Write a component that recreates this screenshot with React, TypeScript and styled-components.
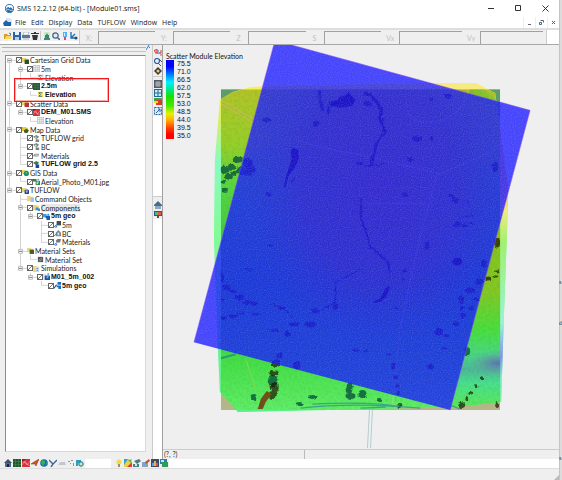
import React from "react";
import styled, { createGlobalStyle } from "styled-components";

const GlobalStyle = createGlobalStyle`
  * { box-sizing: border-box; }
  body { margin: 0; background: #efefef; color: #333; font: 7px/8px Lato, "Liberation Sans", Arial, sans-serif; }
  button, input { font: inherit; color: inherit; margin: 0; padding: 0; border: 0; background: none; border-radius: 0; }
`;

/* ---------- layout ---------- */
const Desktop = styled.div`
  display: flex;
  min-height: 100vh;
`;
const AppWindow = styled.div`
  flex: 1;
  min-width: 0;
  display: flex;
  flex-direction: column;
  background: #efefef;
`;
const Behind = styled.aside`
  flex: 0 0 3px;
  background: #dcdcdc;
  box-shadow: inset 1px 0 #c4c4c4;
  padding-top: 278px;
  display: flex;
  flex-direction: column;
  align-items: flex-start;
  gap: 33px;
  font: 5px/8px "Liberation Sans", Arial, sans-serif;
  span:last-child { margin-top: 94px; }
`;

/* ---------- title and menu ---------- */
const TitleBar = styled.header`
  display: flex;
  align-items: center;
  height: 17px;
  padding-left: 5px;
  background: #fff;
  font: 7px/10px "Open Sans", "Noto Sans", sans-serif;
  color: #111;
`;
const Title = styled.h1`
  flex: 1;
  margin: 0 0 0 3px;
  font-size: 7px;
  font-weight: 400;
`;
const CaptionButton = styled.button`
  width: 27px;
  height: 16px;
  display: grid;
  place-items: center;
`;
const MenuBar = styled.nav`
  display: flex;
  align-items: center;
  height: 11px;
  padding-left: 3px;
  background: #fff;
  font: 7px/10px "Open Sans", "Noto Sans", sans-serif;
  color: #222;
`;
const MenuList = styled.div`
  flex: 1;
  display: flex;
  gap: 5px;
  margin-left: 3px;
`;
const MdiButton = styled.button`
  width: 12px;
  height: 11px;
  display: grid;
  place-items: center;
  border-left: 1px solid #eee;
`;

/* ---------- coordinate bar ---------- */
const TopTools = styled.div`
  display: flex;
  height: 17px;
  background: #fff;
  border-top: 2px solid #dedede;
  border-bottom: 1px solid #a8a8a8;
`;
const FileTools = styled.div`
  display: flex;
  align-items: center;
  align-self: flex-start;
  height: 11px;
  width: 79px;
  padding-left: 3px;
  background: #f0f0f0;
`;
const ToolButton = styled.button<{ $size?: number }>`
  width: ${p => p.$size ?? 9}px;
  height: ${p => p.$size ?? 9}px;
  display: grid;
  place-items: center;
`;
const ToolDivider = styled.span`
  width: 1px;
  height: 9px;
  margin: 0 1px;
  background: #c8c8c8;
`;
const CoordBar = styled.div`
  flex: 1;
  min-width: 0;
  display: grid;
  grid-template-columns: 75fr 75fr 76fr 76fr 81fr 81fr;
  padding: 1px 3px 0 0;
  margin-right: 12px;
  background: #efefef;
  border-left: 1px solid #ccc;
  border-right: 1px solid #ccc;
`;
const Coord = styled.label`
  min-width: 0;
  display: flex;
  align-items: center;
  color: #c0c0c0;
  font-size: 7px;
  span { width: 18px; text-align: center; }
  input {
    flex: 1;
    min-width: 0;
    align-self: stretch;
    border-top: 1px solid #a0a0a0;
    border-left: 1px solid #a0a0a0;
  }
`;

/* ---------- work area ---------- */
const Work = styled.main`
  display: flex;
`;
const Explorer = styled.section`
  flex: 0 0 152px;
  padding: 0 6px 7px 5px;
  display: flex;
  flex-direction: column;
`;
const Gripper = styled.div`
  height: 10px;
  margin-left: -3px;
  display: flex;
  align-items: flex-start;
  &::before {
    content: "";
    flex: 1;
    height: 3px;
    margin-top: 2px;
    border-top: 1px solid #b4b4b4;
    border-bottom: 1px solid #c4c4c4;
  }
  svg { margin-right: -4px; }
`;
const Tree = styled.div`
  position: relative;
  flex: 1;
  background: #fff;
  border: 1px solid #d8d8d8;
  border-top: 1px solid #8c8c8c;
  border-left: 1px solid #8c8c8c;
`;
const Rows = styled.ul`
  list-style: none;
  margin: 0;
  padding: 0;
  height: 234px;
  display: grid;
  grid-auto-rows: 1fr;
`;
const Row = styled.li`
  display: flex;
  align-items: center;
  min-height: 0;
  padding-left: 1px;
  label { display: flex; align-items: center; white-space: nowrap; }
`;
const Guide = styled.span<{ $on: boolean; $narrow: boolean }>`
  flex: 0 0 ${p => (p.$narrow ? 10 : 11)}px;
  align-self: stretch;
  padding-left: 2px;
  &::before {
    content: "";
    display: block;
    width: 1px;
    height: 100%;
    background: ${p => (p.$on ? "#d4d4d4" : "transparent")};
  }
`;
const Branch = styled.span`
  flex: 0 0 9px;
  align-self: stretch;
  display: flex;
  svg { height: 100%; width: 9px; }
`;
const Check = styled.input`
  appearance: none;
  width: 6px;
  height: 6px;
  border: 1px solid #666;
  background: #fff linear-gradient(135deg, transparent 42%, #777 42% 62%, transparent 62%);
`;
const RowIcon = styled.span`
  width: 7px;
  height: 7px;
  margin-right: 1px;
  svg { display: block; }
`;
const RowText = styled.span<{ $bold?: boolean; $selected?: boolean }>`
  font-family: ${p => (p.$bold ? '"Liberation Sans", Arial, sans-serif' : "inherit")};
  font-weight: ${p => (p.$bold ? 700 : 400)};
  color: ${p => (p.$bold ? "#111" : "#222")};
  background: ${p => (p.$selected ? "#e8e8e8" : "transparent")};
`;
const Highlight = styled.div`
  position: absolute;
  left: 8px;
  top: 22px;
  width: 95px;
  height: 24px;
  border: 1px solid #f01818;
  outline: 1px solid rgba(240, 24, 24, 0.35);
  outline-offset: -2px;
  pointer-events: none;
`;
const SideTools = styled.div`
  flex: 0 0 10px;
  background: #fff;
  border-left: 1px solid #ccc;
  border-right: 1px solid #a0a0a0;
`;
const SideGroup = styled.div`
  display: flex;
  flex-direction: column;
  padding: 3px 0 1px;
  background: #efefef;
  & + & { margin-top: 80px; border-top: 1px solid #ccc; }
`;
const SideGap = styled.span`
  height: 3px;
  margin-top: 1px;
  border-top: 1px solid #ccc;
`;
const ViewColumn = styled.section`
  flex: 1;
  min-width: 0;
  display: flex;
  flex-direction: column;
`;
const Viewport = styled.div`
  position: relative;
  flex: 1;
  svg { display: block; width: 100%; height: auto; }
`;
const Legend = styled.figure`
  position: absolute;
  left: 3px;
  top: 7px;
  margin: 0;
  line-height: 8px;
  color: #111;
`;
const LegendBody = styled.div`
  display: flex;
  gap: 3px;
  font: 7px/7px "Liberation Sans", Arial, sans-serif;
`;
const LegendRamp = styled.div`
  width: 8px;
  background: linear-gradient(#0000ff 0 8%, #0060ff 16%, #00f0ff 28%, #00e880 38%, #18e000 46%, #48e800 58%, #e8f000 68%, #ffb000 76%, #ff4000 86%, #ff0000 94%);
`;
const LegendValues = styled.ol`
  list-style: none;
  margin: 0;
  padding: 0;
  height: 79px;
  display: grid;
  grid-auto-rows: 1fr;
  align-items: center;
`;
const Status = styled.footer`
  display: flex;
  height: 10px;
  border-top: 1px solid #ccc;
  line-height: 9px;
  span { width: 142px; border-right: 1px solid #bbb; padding-left: 1px; }
`;
const BottomTools = styled.div`
  display: flex;
  height: 9px;
  background: #fff;
`;
const ToolGroup = styled.div<{ $gap?: boolean }>`
  display: flex;
  align-items: center;
  padding: 0 1px 0 3px;
  margin-right: ${p => (p.$gap ? 26 : 0)}px;
  background: #efefef;
`;
const Grip = styled.div`
  flex: 1;
  min-height: 11px;
  display: flex;
  align-items: flex-end;
  justify-content: flex-end;
  border-top: 1px solid #ddd;
`;

/* ---------- icons ---------- */
const glyphs: Record<string, React.ReactNode> = {
  folderGrid: <><path d="M0 1h4l1 1h2v4H0z" fill="#e9d36a" /><rect x="3" y="3" width="5" height="5" fill="#23552c" /></>,
  folderScatter: <><path d="M0 1h4l1 1h2v4H0z" fill="#e9d36a" /><path d="M3 3h5v5H3z" fill="#c03038" /><circle cx="4" cy="6" r="1" fill="#367a40" /></>,
  folderMap: <><path d="M0 1h4l1 1h2v4H0z" fill="#e9c83a" /><path d="M2 5l3-2 3 2-2 3H3z" fill="#3f5a30" /></>,
  folderGis: <><path d="M0 1h4l1 1h2v4H0z" fill="#e9d36a" /><circle cx="5" cy="5" r="3" fill="#1d8f78" /><path d="M4 3l2 1-1 2z" fill="#78d040" /></>,
  folderModel: <><path d="M0 1h4l1 1h2v4H0z" fill="#e9d36a" /><rect x="3" y="3" width="5" height="5" rx="1" fill="#1c3f92" /><path d="M4 4h3v1H6v2H5V5H4z" fill="#9cc4ff" /></>,
  folderDoc: <><path d="M0 1h4l1 1h2v5H0z" fill="#efd67a" /><path d="M4 3h4v5H4z" fill="#9ec4f0" /></>,
  folderComp: <><path d="M0 1h4l1 1h2v5H0z" fill="#efd67a" /><path d="M3 4h3v3H3zM6 5h2v3H6z" fill="#2d8de0" /></>,
  folderMat: <><path d="M0 1h4l1 1h2v4H0z" fill="#efd67a" /><path d="M3 3h5v5H3z" fill="#356b2b" /><path d="M5 4h3v2H5z" fill="#a03030" /></>,
  folderSim: <><path d="M0 1h4l1 1h2v6H0z" fill="#efd67a" /><path d="M3 2h4v5H3z" fill="#cfe0f4" /><path d="M4 4h2M4 6h2" stroke="#5c86c0" /></>,
  mesh: <><path d="M0 0h8v8H0z" fill="#f2f2f2" /><path d="M.5 0v8M3 0v8M5.500 0v8M7.500 0v8M0 .5h8M0 3h8M0 5.500h8M0 7.500h8" stroke="#b4b4b4" strokeWidth=".6" /></>,
  gridDark: <><path d="M0 0h8v8H0z" fill="#1d5a2d" /><path d="M2.500 0v8M5.500 0v8M0 2.500h8M0 5.500h8" stroke="#4e8a58" strokeWidth=".5" /></>,
  sigma: <><path d="M1 1h6v6H1z" fill="#f1f1f1" stroke="#bbb" strokeWidth=".6" /><path d="M6 2H2l2 2-2 2h4" fill="none" stroke="#666" /></>,
  sigmaOn: <><path d="M1 1h6v6H1z" fill="#ffe84a" /><path d="M6 2H2l2 2-2 2h4" fill="none" stroke="#345a9a" /></>,
  tin: <><path d="M0 0h8v8H0z" fill="#d6323c" /><path d="M0 6l3-4 2 4 3-4M0 2l8 5" fill="none" stroke="#ffc4c4" strokeWidth=".5" /><path d="M0 0h4L0 3z" fill="#842028" /></>,
  cover: <><path d="M0 2l4-2 3 2-3 3zM3 5h4v3H3z" fill="#7a8580" /><path d="M2 2h2v2H2z" fill="#cfd9d0" /></>,
  coverOn: <><path d="M0 2l4-2 3 2-3 3z" fill="#3d7d48" /><path d="M3 4h4v4H3z" fill="#1648a0" /></>,
  layer: <><path d="M0 4l2-2h5L6 5H1z" fill="#8f9592" /><path d="M2 3h4v1H2z" fill="#ddd" /></>,
  photo: <><path d="M0 1h4v3H0zM3 3h5v5H3z" fill="#2f7e50" /><path d="M4 4h3v1H6v2H4z" fill="#b6dcbc" /><path d="M5 1h2v1H5z" fill="#4d84b0" /></>,
  comp: <><path d="M0 1h4v4H0z" fill="#3ba2e6" /><path d="M3 3h5v5H4V6H3z" fill="#145cb8" /><path d="M5 1h2v2H5z" fill="#2d8de0" /></>,
  linkGrid: <><path d="M3 0h5v5H3z" fill="#444b52" /><path d="M0 7l3-3M1 7h2V5" stroke="#2d6fb8" strokeWidth="1.100" fill="none" /></>,
  linkBc: <><path d="M2 3l3-3 3 3v4H2z" fill="#7a8794" /><path d="M0 7l3-3" stroke="#2d6fb8" /><path d="M4 3h2v3H4z" fill="#dce4ea" /></>,
  linkMat: <><path d="M2 2l2-2h4L7 4H3z" fill="#6f7a84" /><path d="M0 7l3-3M1 7h2V5" stroke="#2d6fb8" fill="none" /></>,
  swatch: <><path d="M1 1h6v6H1z" fill="#555" /><path d="M2 5l4-3M3 6l3-2" stroke="#bbb" strokeWidth=".7" /></>,
  sim: <><path d="M0 1h4v7H0z" fill="#d8e2f0" /><path d="M2 3h6v5H2z" fill="#1e50a8" /><path d="M5 0h2v4H5zM4 4h2v2H4z" fill="#78aee8" /></>,
  linkComp: <><path d="M4 0h4v3H4zM3 4h5v4H5V6H3z" fill="#176fc4" /><path d="M0 7l3-4" stroke="#38516a" strokeWidth="1.200" /></>,
  open: <><path d="M0 2h3l1 1h3v4H0z" fill="#d99c20" /><path d="M1 7l1-3h6L7 7z" fill="#ffd75e" /><path d="M5 1l2 1-1 1" fill="none" stroke="#2456a0" strokeWidth=".8" /></>,
  save: <><path d="M0 0h8v8H0z" fill="#2f62a6" /><path d="M2 0h4v3H2z" fill="#e6eefa" /><path d="M2 5h4v3H2z" fill="#b9cbe2" /></>,
  print: <><path d="M2 0h5L6 3H1z" fill="#fff" stroke="#8897a8" strokeWidth=".6" /><path d="M0 3h8v3H0z" fill="#60758f" /><path d="M1 6h6v2H1z" fill="#c8d4e4" /></>,
  trash: <path d="M0 1h3V0h2v1h3v1H0zM1 3h6L6 8H2z" fill="#333" />,
  imp: <><path d="M1 0h5l1 2v6H1z" fill="#cfe5d0" /><path d="M2 6V3h1l1-2 1 2h1v3z" fill="#269a48" /><path d="M1 6h6v2H1z" fill="#507a9a" /></>,
  zoom: <><circle cx="3.500" cy="3.500" r="2.700" fill="#d7ebf8" stroke="#456078" strokeWidth="1.200" /><path d="M5.500 5.500L8 8" stroke="#456078" strokeWidth="1.500" /></>,
  lamp: <><path d="M2 0h4v5H2z" fill="#58b0f0" /><path d="M3 5h2v3H3z" fill="#e04a58" /><path d="M3 1h1v3H3z" fill="#d8f0ff" /></>,
  axes: <><path d="M1 0v6h6M1 6l4-4" fill="none" stroke="#1f66ad" strokeWidth="1.300" /><circle cx="6" cy="6" r="1.500" fill="#2b4c6c" /></>,
  rotate: <><path d="M1 4h6M4 1v2" stroke="#3c73c0" fill="none" /><path d="M0 2l3-2v4zM7 1v3H5M6 6h2" fill="none" stroke="#df5050" strokeWidth="1.200" /></>,
  pan: <><circle cx="3" cy="3" r="2.500" fill="none" stroke="#2e62a5" strokeWidth="1.200" /><path d="M4 5l3 3M5 1l3 3" stroke="#485868" /></>,
  spin: <><path d="M4 0l4 4-4 4-4-4z" fill="#3a3a3a" /><circle cx="4" cy="4" r="1.500" fill="#e8cd68" /></>,
  plot: <><path d="M0 0h8v8H0z" fill="#555e66" /><path d="M1 3h6M1 5h6M3 1v6M5 1v6" stroke="#c6ced5" strokeWidth=".8" /></>,
  split: <><path d="M0 0h8v8H0z" fill="#226a98" /><path d="M1 1h2.500v2.500H1zM4.500 1H7v2.500H4.500zM1 4.500h2.500V7H1zM4.500 4.500H7V7H4.500z" fill="#c5edf8" /></>,
  contour: <><path d="M0 0h8v3H0z" fill="#36a642" /><path d="M2 2h6v5H2z" fill="#d83a28" /><path d="M0 3h4v2H0z" fill="#f0da38" /></>,
  frame: <><path d="M.5.5h7v7h-7z" fill="#dbeaf7" stroke="#2a66a4" strokeDasharray="2 1" /><path d="M2 6l4-4M4 2h2v3" fill="none" stroke="#2a66a4" /></>,
  house: <><path d="M0 4l4-4 4 4v1H0z" fill="#456b8f" /><path d="M1 5h6v3H1z" fill="#8ba8c0" /></>,
  screen: <><path d="M0 1h8v5H0z" fill="#27589a" /><path d="M1 2h3v3H1z" fill="#48c068" /><path d="M4 2h3v3H4z" fill="#e05850" /><path d="M3 6h2v2H3z" fill="#555" /></>,
  home: <><path d="M0 4l4-4 4 4z" fill="#3a5168" /><path d="M1 4h6v4H1z" fill="#476e94" /><path d="M3 5h2v3H3z" fill="#223" /></>,
  arrow: <path d="M8 0L5 7 4 5 0 5l3-2z" fill="#d05020" stroke="#883010" strokeWidth=".5" />,
  globe: <><circle cx="4" cy="4" r="3.800" fill="#176cbc" /><path d="M2 1l3 1v2L3 7 1 4zM6 4l2-1-1 4z" fill="#3bb045" /></>,
  river: <path d="M0 1l4 4 4-4M4 5L2 8" fill="none" stroke="#3c669e" strokeWidth="1.400" />,
  surface: <path d="M0 6l2-3h5l1 3z" fill="#c4c8cb" />,
  points: <path d="M1 2h2v1H1zM4 1h2v1H4zM3 4h1v1H3zM6 4h1v3H6z" fill="#8f959a" />,
  feature: <><path d="M0 1h5v3H2v3H0z" fill="#2aa0b8" /><circle cx="5" cy="5" r="2.200" fill="#bfe6c0" stroke="#18708c" /></>,
  bulb: <><circle cx="4" cy="3" r="2.500" fill="#f6d84c" /><path d="M3 5h2v3H3z" fill="#a09060" /></>,
  palette: <><path d="M0 0h8v8H0z" fill="#f0cf46" /><path d="M0 0h4L0 6z" fill="#32a0d8" /><path d="M8 3v5H3z" fill="#de4030" /><path d="M4 1h3v3z" fill="#58b848" /></>,
  stamp: <><path d="M1 2l5-2 2 2-4 3zM0 5h6v3H0z" fill="#4c7c84" /><path d="M2 5h2v2H2z" fill="#d4e8e2" /></>,
  brush: <><path d="M0 3h6v5H0z" fill="#86a3bf" /><path d="M3 3l4-3 1 2-4 3z" fill="#bf5344" /></>,
  chart: <><path d="M0 0h8v8H0z" fill="#3d4b68" /><path d="M1 4h2v3H1z" fill="#52a6e8" /><path d="M3 2h2v5H3z" fill="#e9b438" /><path d="M5 4h2v3H5z" fill="#dc4848" /></>,
  screenGreen: <><path d="M0 0h7v5H0z" fill="#2b7fae" /><path d="M2 3h6v5H2z" fill="#2f9b58" /><path d="M1 1h3v2H1z" fill="#c3e7f0" /></>,
};
const Icon = ({ name, size = 7 }: { name: string; size?: number }) => (
  <svg width={size} height={size} viewBox="0 0 8 8" aria-hidden="true">{glyphs[name]}</svg>
);
const Logo = ({ size = 9 }: { size?: number }) => (
  <svg width={size} height={size} viewBox="0 0 20 20" aria-hidden="true">
    <circle cx="10" cy="10" r="9" fill="#fff" stroke="#1c5c94" strokeWidth="2" />
    <path d="M2 11l5-5 3 3 3-2 5 5c-1 5-5 7-8 7s-7-3-8-8z" fill="#1c6cae" />
    <path d="M3 13q4-3 7 0t7 0" fill="none" stroke="#fff" strokeWidth="1.500" />
  </svg>
);

/* ---------- data ---------- */
type Node = { level: number; text: string; icon: string; box?: boolean; open?: boolean; bold?: boolean; selected?: boolean };
const n = (level: number, text: string, icon: string, flags = ""): Node => ({
  level, text, icon,
  box: flags.includes("c"), open: flags.includes("o"), bold: flags.includes("b"), selected: flags.includes("s"),
});
const nodes: Node[] = [
  n(0, "Cartesian Grid Data", "folderGrid", "co"),
  n(1, "5m", "mesh", "co"),
  n(2, "Elevation", "sigma"),
  n(1, "2.5m", "gridDark", "cob"),
  n(2, "Elevation", "sigmaOn", "b"),
  n(0, "Scatter Data", "folderScatter", "co"),
  n(1, "DEM_M01.SMS", "tin", "cob"),
  n(2, "Elevation", "mesh"),
  n(0, "Map Data", "folderMap", "co"),
  n(1, "TUFLOW grid", "cover", "c"),
  n(1, "BC", "cover", "c"),
  n(1, "Materials", "layer", "c"),
  n(1, "TUFLOW grid 2.5", "coverOn", "cb"),
  n(0, "GIS Data", "folderGis", "co"),
  n(1, "Aerial_Photo_M01.jpg", "photo", "c"),
  n(0, "TUFLOW", "folderModel", "co"),
  n(1, "Command Objects", "folderDoc"),
  n(1, "Components", "folderComp", "cos"),
  n(2, "5m geo", "comp", "cob"),
  n(3, "5m", "linkGrid", "c"),
  n(3, "BC", "linkBc", "c"),
  n(3, "Materials", "linkMat", "c"),
  n(1, "Material Sets", "folderMat", "o"),
  n(2, "Material Set", "swatch"),
  n(1, "Simulations", "folderSim", "co"),
  n(2, "M01_5m_002", "sim", "cob"),
  n(3, "5m geo", "linkComp", "cb"),
];
const continues = (index: number, level: number) => {
  for (let i = index + 1; i < nodes.length; i++) {
    if (nodes[i].level < level) return false;
    if (nodes[i].level === level) return true;
  }
  return false;
};

const TreeRow = ({ node, index }: { node: Node; index: number }) => (
  <Row>
    {Array.from({ length: node.level }, (_, l) => <Guide key={l} $narrow={l === 1} $on={continues(index, l)} />)}
    <Branch>
      <svg viewBox="0 0 9 9" preserveAspectRatio="none" aria-hidden="true">
        <path d={`M2.500 ${index ? 0 : 4}V${continues(index, node.level) ? 9 : 4}M2 4.500h7`} stroke="#d4d4d4" fill="none" />
        {node.open && <><path d="M.5 2.500h4v4h-4z" fill="#fff" stroke="#bcbcbc" /><path d="M1 4.500h3" stroke="#777" /></>}
      </svg>
    </Branch>
    <label>
      {node.box && <Check type="checkbox" defaultChecked />}
      <RowIcon><Icon name={node.icon} /></RowIcon>
      <RowText $bold={node.bold} $selected={node.selected}>{node.text}</RowText>
    </label>
  </Row>
);

/* ---------- map ---------- */
type Blob = [number, number, number, number];
const greenTrees: Blob[] = [
  [224, 170, 5, 4], [231, 167, 4, 3], [237, 160, 5, 3], [240, 171, 5, 4], [228, 177, 4, 3], [222, 182, 3, 2], [224, 190, 3, 2], [233, 174, 3, 2],
  [312, 398, 4, 2], [299, 405, 4, 2], [349, 389, 3, 6], [350, 397, 5, 3], [362, 395, 4, 4], [379, 401, 2, 2], [253, 398, 3, 3], [272, 382, 5, 6], [467, 352, 3, 4],
];
const trees: Blob[] = [
  [247, 163, 5, 5], [250, 170, 5, 4], [247, 174, 5, 2],
  [266, 120, 5, 2], [333, 104, 5, 3], [367, 104, 4, 3], [319, 97, 2, 7], [321, 107, 2, 5], [328, 111, 2, 4], [316, 124, 3, 3],
  [367, 94, 4, 2], [381, 120, 3, 2], [359, 163, 3, 2], [268, 195, 3, 2],
  [448, 96, 4, 3], [431, 100, 2, 2], [417, 139, 5, 3], [431, 139, 2, 2], [410, 160, 3, 2], [495, 167, 3, 5], [404, 195, 3, 2],
  [451, 197, 3, 2], [455, 201, 3, 3], [467, 202, 2, 1], [457, 225, 4, 3], [465, 226, 3, 2], [461, 218, 2, 1], [467, 217, 2, 1], [472, 216, 2, 1], [472, 224, 2, 1], [427, 246, 3, 4],
  [484, 264, 3, 4], [497, 243, 3, 5], [488, 279, 3, 2], [495, 277, 3, 1], [497, 272, 2, 2], [479, 282, 4, 3], [470, 291, 5, 3], [461, 300, 3, 4], [476, 300, 3, 2], [462, 309, 3, 2], [471, 309, 3, 2], [463, 316, 3, 3],
  [456, 325, 3, 2], [439, 333, 4, 4], [446, 337, 3, 2], [444, 349, 2, 1], [430, 368, 3, 3], [404, 271, 2, 2], [403, 280, 2, 1], [397, 309, 2, 1],
  [296, 366, 4, 4], [273, 374, 5, 3], [274, 388, 4, 5], [272, 396, 4, 4], [275, 364, 4, 4], [279, 356, 3, 3], [310, 325, 6, 3], [294, 325, 6, 2], [287, 335, 3, 3], [281, 309, 4, 2],
  [315, 312, 4, 2], [335, 307, 3, 3], [273, 331, 5, 1], [270, 246, 3, 1], [248, 270, 4, 1],
  [221, 278, 2, 6], [226, 288, 4, 3], [232, 292, 4, 2], [239, 298, 5, 3], [246, 303, 4, 2], [253, 304, 4, 2], [232, 317, 5, 2], [240, 314, 4, 1], [222, 319, 3, 2], [255, 315, 5, 1], [220, 301, 3, 2],
  [355, 351, 4, 1], [365, 352, 3, 1], [393, 367, 2, 3], [395, 378, 2, 2], [397, 387, 2, 2], [398, 394, 2, 2], [399, 407, 2, 3], [388, 355, 3, 1],
  [482, 379, 2, 2], [476, 387, 2, 2], [470, 394, 2, 2], [466, 400, 2, 2], [461, 406, 4, 3], [497, 406, 2, 3],
];
const blobs = (list: Blob[]) => list.map(([x, y, rx, ry], i) => <ellipse key={i} cx={x} cy={y} rx={rx} ry={ry} />);

const MapView = () => (
  <svg viewBox="162 45 397 405" role="img" aria-label="Scatter elevation over aerial photo">
    <defs>
      <linearGradient id="tin" x1="0" y1="0" x2="0" y2="1">
        <stop offset="0" stopColor="#fff04a" /><stop offset=".12" stopColor="#d4f06a" /><stop offset=".24" stopColor="#88fcc0" />
        <stop offset=".45" stopColor="#84fa98" /><stop offset="1" stopColor="#5cf08a" />
      </linearGradient>
      <linearGradient id="ground" x1="0" y1="0" x2="0" y2="1">
        <stop offset="0" stopColor="#b4c428" /><stop offset=".17" stopColor="#98d028" /><stop offset=".3" stopColor="#58d840" />
        <stop offset=".6" stopColor="#30bc48" /><stop offset=".85" stopColor="#44e048" /><stop offset="1" stopColor="#60ee68" />
      </linearGradient>
      <linearGradient id="east" gradientUnits="userSpaceOnUse" x1="0" y1="190" x2="0" y2="405">
        <stop offset="0" stopColor="#ffb878" /><stop offset=".1" stopColor="#f0ec80" /><stop offset=".25" stopColor="#a0f070" />
        <stop offset=".62" stopColor="#98f4d8" /><stop offset=".78" stopColor="#8c8cf8" /><stop offset=".88" stopColor="#80f0d0" /><stop offset="1" stopColor="#80f4a0" />
      </linearGradient>
      <linearGradient id="eastGround" gradientUnits="userSpaceOnUse" x1="0" y1="230" x2="0" y2="405">
        <stop offset="0" stopColor="#88c81c" /><stop offset=".35" stopColor="#84c824" /><stop offset=".58" stopColor="#48e040" />
        <stop offset=".72" stopColor="#48d888" /><stop offset=".8" stopColor="#4cb898" /><stop offset=".88" stopColor="#48e090" /><stop offset="1" stopColor="#58e860" />
      </linearGradient>
      <radialGradient id="ridge"><stop offset="0" stopColor="#b07020" stopOpacity=".95" /><stop offset=".6" stopColor="#a08020" stopOpacity=".75" /><stop offset="1" stopColor="#809820" stopOpacity="0" /></radialGradient>
      <radialGradient id="pond"><stop offset="0" stopColor="#6070b8" /><stop offset="1" stopColor="#60b0a0" stopOpacity="0" /></radialGradient>
      <filter id="rough" x="-5%" y="-5%" width="110%" height="110%">
        <feTurbulence type="fractalNoise" baseFrequency=".25" numOctaves="2" seed="4" />
        <feDisplacementMap in="SourceGraphic" scale="4" xChannelSelector="R" yChannelSelector="G" />
      </filter>
      <filter id="grain" x="0" y="0" width="100%" height="100%">
        <feTurbulence type="fractalNoise" baseFrequency=".35" numOctaves="3" seed="8" />
        <feColorMatrix values="0 0 0 0 .1  0 0 0 0 .3  0 0 0 0 .05  1.500 0 0 0 -.6" />
        <feComposite in2="SourceGraphic" operator="in" />
      </filter>
      <filter id="speckle" x="0" y="0" width="100%" height="100%">
        <feTurbulence type="fractalNoise" baseFrequency=".9" numOctaves="1" seed="2" />
        <feColorMatrix values="0 0 0 0 .5  0 0 0 0 .5  0 0 0 0 .95  2 0 0 0 -.8" />
        <feComposite in2="SourceGraphic" operator="in" />
      </filter>
      <clipPath id="photo"><path d="M220 89.500H500V411H220z" /></clipPath>
      <clipPath id="hull"><path d="M219 100L232 92 250 87 437 83H475L495 93 500 130 508 190 507 230 504 310 501 403 455 408 237 413 219 393 217 350 213 240 214 160z" /></clipPath>
    </defs>
    <rect x="162" y="45" width="397" height="405" fill="#efefef" />
    <g clipPath="url(#photo)">
      <rect x="220" y="89" width="280" height="322" fill="#b5b688" />
      <path d="M220 89h22l-22 14zM470 89h30v30z" fill="#5b9c68" />
    </g>
    <g clipPath="url(#hull)">
      <rect x="212" y="82" width="298" height="332" fill="url(#tin)" />
      <path d="M420 82h70v12h-70z" fill="#f6ea80" />
      <path d="M499 90l10 80v240h-10z" fill="url(#east)" />
      <g clipPath="url(#photo)">
        <rect x="220" y="89" width="280" height="322" fill="url(#ground)" />
        <path d="M505 200L450 411H505z" fill="url(#eastGround)" />
        <path d="M470 89h13l15 12v5l-29-8z" fill="#8ac830" />
        <ellipse cx="380" cy="185" rx="135" ry="160" fill="url(#ridge)" />
        <ellipse cx="497" cy="364" rx="30" ry="14" fill="url(#pond)" />
        <rect x="220" y="89" width="280" height="322" filter="url(#grain)" opacity=".3" />
        <path d="M220 100l34 20M220 104l33 19" stroke="#c8b860" strokeWidth="1" fill="none" />
        <path d="M245 360l10 30" stroke="#88d850" strokeWidth="1" fill="none" />
        <path d="M220 359l15-4" stroke="#2a9c78" strokeWidth="2" fill="none" />
      </g>
    </g>
    <g clipPath="url(#photo)">
      <path d="M295 140q30 10 60 14l85 20 60-26M437 174q-8 30-17 62l-20 90-8 80M405 94q0 30 20 28 35 2 43-32M365 204h60" fill="none" stroke="#d8d8a0" strokeWidth="1.500" opacity=".35" />
      <g fill="#0a5c3c" opacity=".85" filter="url(#rough)">{blobs(greenTrees)}</g>
      <g fill="#1c1000" opacity=".68" filter="url(#rough)">{blobs(trees)}</g>
      <g fill="#280400" opacity=".9">
        <path d="M330 105l2-3 5-1 2-4 5-1 4-4 4 5 3 3-3 6-13 2z" />
        <path d="M290 151q1-4 5-2l3 1v10l-4 8-6 8-3 11-2 1 3-14 3-8 2-8z" />
        <ellipse cx="457" cy="262" rx="5" ry="4" />
        <path d="M372 303l8-4 4-9 5-4v4l-3 7-5 5-6 2z" />
      </g>
      <g fill="none" stroke="#300800" filter="url(#rough)" opacity=".8" strokeLinecap="round">
        <path d="M293 178l-3 7" strokeWidth="1" />
        <path d="M366 94l9 6 6 10-2 9 6 13-8 9-4 14-2 10" strokeWidth="3" />
        <path d="M361 200l-1 18 6 16 4 14 8 6 9 8 3 11" strokeWidth="2" />
        <path d="M360 270l-25 13v20l-14 8M270 305l12 3 10 10M355 164l15 2 14-2" strokeWidth="1" />
      </g>
      <path d="M257 410l3-10 6-8 5 3-6 8-3 7z" fill="#705018" />
      <path d="M300 409q50-6 120 0M312 405q60-3 90 3M360 409l25-1M450 406l10 4" fill="none" stroke="#309090" strokeWidth="1.200" opacity=".75" />
    </g>
    <path d="M369 411L367 449M372 411L370 449" stroke="#b4cece" strokeWidth="1" />
    <path d="M273 45H291L530 110.500 450 411 193 343z" fill="#1414ff" fillOpacity=".78" />
    <path d="M273 45H291L530 110.500 450 411 193 343z" filter="url(#speckle)" opacity=".22" />
    <path d="M291 45L530 110.500 450 411M193 343L273 45" fill="none" stroke="#9050f0" strokeWidth=".7" opacity=".7" />
  </svg>
);

const tools = (names: string[], size = 9) =>
  names.map(name => <ToolButton key={name} $size={size} aria-label={name}><Icon name={name} size={size - 1} /></ToolButton>);

export default function App() {
  return (
    <>
      <GlobalStyle />
      <Desktop>
        <AppWindow>
          <TitleBar>
            <Logo />
            <Title>SMS 12.2.12 (64-bit) - [Module01.sms]</Title>
            <CaptionButton aria-label="Minimize"><svg width="7" height="7"><path d="M0 3.500h6" stroke="#333" /></svg></CaptionButton>
            <CaptionButton aria-label="Maximize"><svg width="7" height="7"><path d="M.5.5h5v5h-5z" fill="none" stroke="#333" /></svg></CaptionButton>
            <CaptionButton aria-label="Close"><svg width="7" height="7"><path d="M.5.5l6 6M6.500.5l-6 6" stroke="#333" /></svg></CaptionButton>
          </TitleBar>
          <MenuBar>
            <svg width="9" height="9" viewBox="0 0 9 9" aria-hidden="true">
              <path d="M3 0h4l2 2v5H3z" fill="#d7e5f2" /><path d="M0 5l3-3 2 2 3 0v4H1z" fill="#1c64a8" />
            </svg>
            <MenuList>
              {["File", "Edit", "Display", "Data", "TUFLOW", "Window", "Help"].map(m => <button key={m}>{m}</button>)}
            </MenuList>
            <MdiButton aria-label="Minimize document"><svg width="5" height="5"><path d="M1 4.500h3" stroke="#667" /></svg></MdiButton>
            <MdiButton aria-label="Restore document"><svg width="5" height="5"><path d="M1.500.5h3v2M.5 2.500h2v2h-2z" fill="none" stroke="#567" /></svg></MdiButton>
            <MdiButton aria-label="Close document"><svg width="5" height="5"><path d="M1 1l3 3M4 1l-3 3" stroke="#567" /></svg></MdiButton>
          </MenuBar>
          <TopTools>
            <FileTools>
              {tools(["open", "save", "print", "trash"])}
              <ToolDivider />
              {tools(["imp", "zoom", "lamp", "axes"])}
            </FileTools>
            <CoordBar>
              {["X:", "Y:", "Z", "S", "Vx", "Vy"].map(c => <Coord key={c}><span>{c}</span><input type="text" disabled /></Coord>)}
            </CoordBar>
          </TopTools>
          <Work>
            <Explorer>
              <Gripper><svg width="4" height="5"><path d="M0 5l3-5M2 1l2 2" stroke="#2f86d8" /></svg></Gripper>
              <Tree>
                <Rows>{nodes.map((node, i) => <TreeRow key={i} node={node} index={i} />)}</Rows>
                <Highlight />
              </Tree>
            </Explorer>
            <SideTools>
              <SideGroup>
                {tools(["rotate", "pan", "spin"])}
                <SideGap />
                {tools(["plot", "split", "contour", "frame"])}
              </SideGroup>
              <SideGroup>{tools(["house", "screen"])}</SideGroup>
            </SideTools>
            <ViewColumn>
              <Viewport>
                <MapView />
                <Legend>
                  <figcaption>Scatter Module Elevation</figcaption>
                  <LegendBody>
                    <LegendRamp />
                    <LegendValues>
                      {["75.5", "71.0", "66.5", "62.0", "57.5", "53.0", "48.5", "44.0", "39.5", "35.0"].map(v => <li key={v}>{v}</li>)}
                    </LegendValues>
                  </LegendBody>
                </Legend>
              </Viewport>
              <Status><span>(?, ?)</span></Status>
            </ViewColumn>
          </Work>
          <BottomTools>
            <ToolGroup $gap>{tools(["home", "gridDark", "tin", "arrow", "globe", "river", "surface", "points", "feature"])}</ToolGroup>
            <ToolGroup>{tools(["bulb", "palette", "stamp", "brush", "chart", "screenGreen"])}</ToolGroup>
          </BottomTools>
          <Grip><svg width="5" height="5"><path d="M5 0v5H0z" fill="#bbb" /></svg></Grip>
        </AppWindow>
        <Behind><span>s</span><span>d</span><span>s</span></Behind>
      </Desktop>
    </>
  );
}
